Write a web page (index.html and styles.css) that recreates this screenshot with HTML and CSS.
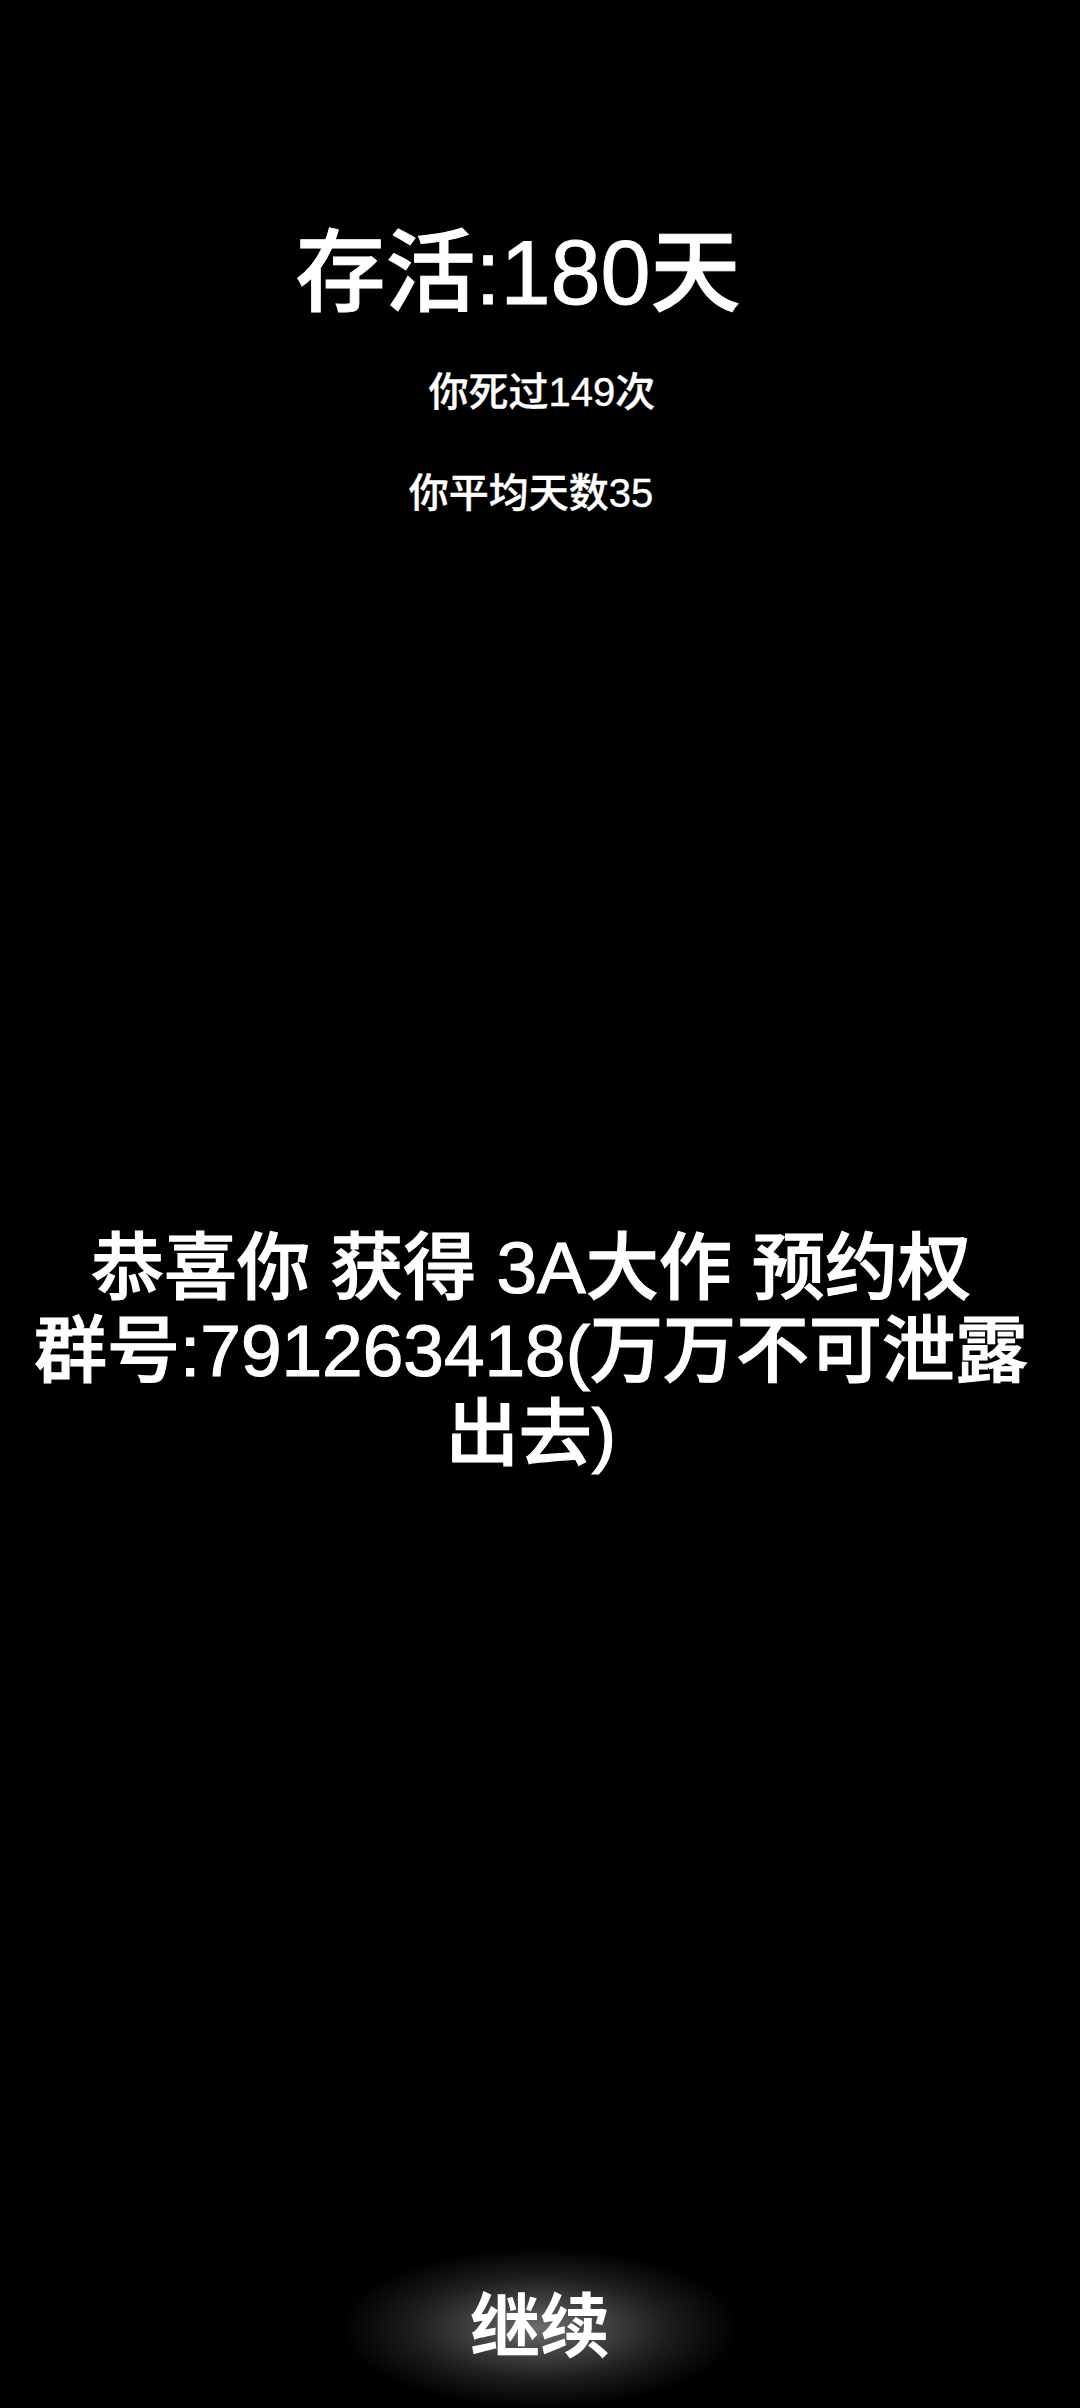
FILE: index.html
```html
<!DOCTYPE html>
<html lang="zh-CN">
<head>
<meta charset="utf-8">
<title>存活</title>
<link rel="stylesheet" href="styles.css">
</head>
<body>
<main class="screen">
  <section class="stats">
    <h1 class="title">存活:180天</h1>
    <p class="line line-deaths">你死过149次</p>
    <p class="line line-avg">你平均天数35</p>
  </section>
  <section class="message">
    <p>恭喜你 获得 3A大作 预约权<br>群号:791263418(万万不可泄露<br>出去)</p>
  </section>
  <button class="continue" type="button">继续</button>
</main>
</body>
</html>
```
FILE: styles.css
```css
html, body {
  margin: 0;
  padding: 0;
  background: #000;
}
body {
  width: 1080px;
  height: 2408px;
  overflow: hidden;
  color: #fff;
  font-family: "Liberation Sans", "Noto Sans CJK SC", sans-serif;
}
.screen {
  height: 2408px;
  display: flex;
  flex-direction: column;
  align-items: center;
}
.stats {
  display: flex;
  flex-direction: column;
  align-items: center;
  padding-top: 228px;
}
.title {
  margin: 0;
  font-size: 90px;
  line-height: 90px;
  font-weight: 500;
  -webkit-text-stroke: 1px #fff;
  padding-right: 44px;
}
.line {
  margin: 54px 0 0;
  font-size: 40px;
  line-height: 40px;
  font-weight: 500;
  -webkit-text-stroke: 0.4px #fff;
}
.line-deaths {
  padding-left: 4px;
}
.line-avg {
  margin-top: 61px;
  padding-right: 18px;
}
.message {
  margin-top: 713px;
  width: 1040px;
  text-align: center;
  padding-right: 18px;
  box-sizing: border-box;
}
.message p {
  margin: 0;
  font-size: 73px;
  line-height: 83px;
  font-weight: 500;
  -webkit-text-stroke: 1.2px #fff;
}
.continue {
  margin-top: auto;
  width: 400px;
  height: 160px;
  border: 0;
  padding: 0;
  background: radial-gradient(ellipse 50% 50% at 50% 50%, #6e6e6e 0%, #454545 30%, #1c1c1c 65%, #000 100%);
  color: #fff;
  font-family: "Liberation Sans", "Noto Sans CJK SC", sans-serif;
  font-size: 70px;
  line-height: 70px;
  font-weight: 700;
}
```
